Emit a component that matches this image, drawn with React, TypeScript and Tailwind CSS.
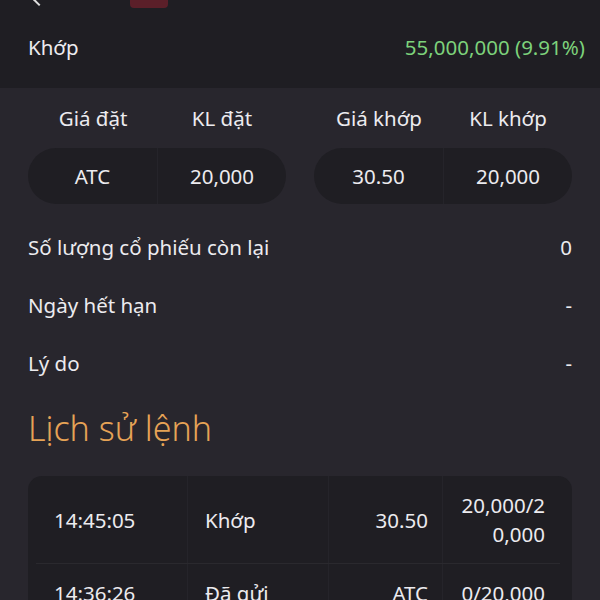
import { ReactNode } from "react";

const Row = ({ label, value }: { label: string; value: string }) => (
  <div className="flex justify-between items-center h-[58px] px-7">
    <p>{label}</p>
    <p>{value}</p>
  </div>
);

const Pill = ({ a, b }: { a: string; b: string }) => (
  <div className="flex h-[56px] rounded-full bg-[#1f1e23]">
    <div className="w-[130px] flex items-center justify-center border-r border-[#25242a]">{a}</div>
    <div className="flex-1 flex items-center justify-center">{b}</div>
  </div>
);

const Cell = ({ children, className }: { children: ReactNode; className?: string }) => (
  <div className={"flex items-center py-[15px] " + (className ?? "")}>{children}</div>
);

const App = () => {
  return (
    <div
      className="w-[600px] h-[600px] overflow-hidden bg-[#28262d] text-[#ecebef] text-[20.5px]"
      style={{ fontFamily: "'Noto Sans', sans-serif" }}
    >
      <div className="bg-[#1f1e23] h-[88px] relative">
        <div className="absolute left-[34px] -top-[6px] w-[10px] h-[10px] border-l-2 border-b-2 border-[#e0e0e0] rotate-45" />
        <div className="absolute left-[130px] -top-[6px] w-[38px] h-[14px] rounded-[4px] bg-[#5b1f29]" />
        <div className="flex justify-between items-center h-full pl-7 pr-[15px] pt-[6px]">
          <p>Khớp</p>
          <p className="text-[#7dd27b]">55,000,000 (9.91%)</p>
        </div>
      </div>

      <div className="grid grid-cols-2 gap-7 px-7 pt-[15px]">
        <div>
          <div className="flex h-[30px] items-center mb-[15px]">
            <p className="w-[130px] text-center">Giá đặt</p>
            <p className="flex-1 text-center">KL đặt</p>
          </div>
          <Pill a="ATC" b="20,000" />
        </div>
        <div>
          <div className="flex h-[30px] items-center mb-[15px]">
            <p className="w-[130px] text-center">Giá khớp</p>
            <p className="flex-1 text-center">KL khớp</p>
          </div>
          <Pill a="30.50" b="20,000" />
        </div>
      </div>

      <div className="mt-[14px]">
        <Row label="Số lượng cổ phiếu còn lại" value="0" />
        <Row label="Ngày hết hạn" value="-" />
        <Row label="Lý do" value="-" />
      </div>

      <p className="px-7 mt-[14px] text-[34px] text-[#e6a356] font-light leading-[44px]">Lịch sử lệnh</p>

      <div className="mx-7 mt-[26px] rounded-[14px] bg-[#1f1e23]">
        <div className="relative grid grid-cols-[160px_141px_114px_1fr] leading-[29px]">
          <Cell className="pl-[26px] border-r border-[#25242a]">14:45:05</Cell>
          <Cell className="pl-[17px] border-r border-[#25242a]">Khớp</Cell>
          <Cell className="justify-end pr-[14px] border-r border-[#25242a]">30.50</Cell>
          <Cell className="justify-end pr-[27px] text-right">
            <span>
              20,000/2
              <br />
              0,000
            </span>
          </Cell>
          <div className="absolute left-[8px] right-[12px] bottom-0 h-px bg-[#2a292e]" />
        </div>
        <div className="grid grid-cols-[160px_141px_114px_1fr] leading-[29px]">
          <Cell className="pl-[26px] border-r border-[#25242a]">14:36:26</Cell>
          <Cell className="pl-[17px] border-r border-[#25242a]">Đã gửi</Cell>
          <Cell className="justify-end pr-[14px] border-r border-[#25242a]">ATC</Cell>
          <Cell className="justify-end pr-[27px]">0/20,000</Cell>
        </div>
      </div>
    </div>
  );
};

export default App;
